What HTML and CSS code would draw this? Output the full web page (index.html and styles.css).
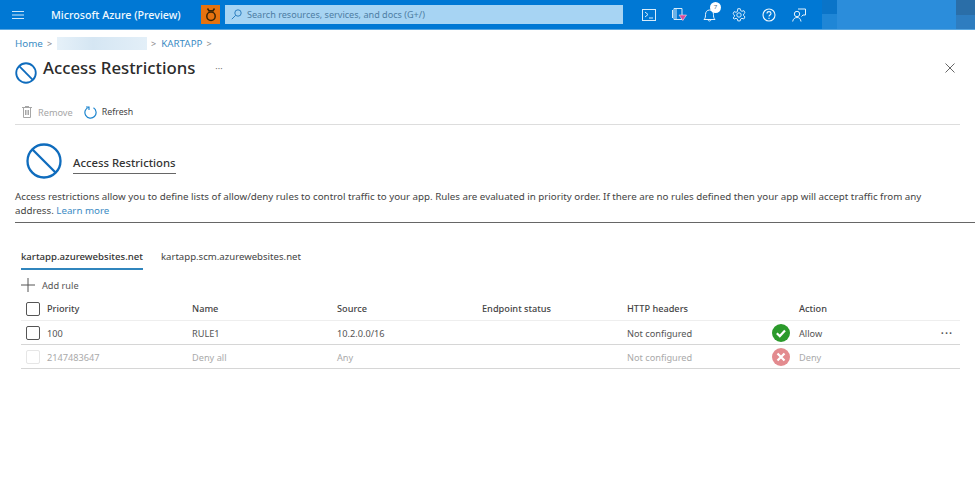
FILE: index.html
```html
<!DOCTYPE html>
<html lang="en">
<head>
    <meta charset="UTF-8">
    <title>Access Restrictions - Microsoft Azure</title>
    <link rel="stylesheet" href="styles.css">
</head>
<body>
    <header class="topbar">
        <svg class="menu-icon" width="12" height="10" viewBox="0 0 12 10"><path d="M0 1.500h12M0 5h12M0 8.500h12" stroke="#cfe6f8" stroke-width="1"/></svg>
        <div class="brand">Microsoft Azure (Preview)</div>
        <div class="bug-btn">
            <svg width="14" height="15" viewBox="0 0 14 15" fill="none" stroke="#3a2506" stroke-width="1.500"><circle cx="7" cy="9.200" r="4.200"/><path d="M3.500 1.500l2 3M10.500 1.500l-2 3M5 3.800h4"/></svg>
        </div>
        <div class="search">
            <svg width="11" height="11" viewBox="0 0 11 11" fill="none" stroke="#2f7fbf" stroke-width="1"><circle cx="7" cy="4" r="3.200"/><path d="M4.700 6.300L.8 10.200"/></svg>
            <span>Search resources, services, and docs (G+/)</span>
        </div>
        <nav class="top-icons">
            <svg width="14" height="12" viewBox="0 0 14 12" fill="none" stroke="#d8ecfa"><rect x=".5" y=".5" width="13" height="11"/><path d="M3 3l3 2.500L3 8M7 9h4"/></svg>
            <svg width="15" height="15" viewBox="0 0 15 15" fill="none" stroke="#d8ecfa"><path d="M2 1.500h8v11H2zM.5 3v8M4 1.500v11"/><path d="M7 8h7.500l-3.700 5.500z" fill="#d84a9c" stroke="#f4d6e8" stroke-width=".6"/></svg>
            <div class="bell">
                <svg width="13" height="15" viewBox="0 0 13 15" fill="none" stroke="#e6f3fc"><path d="M1 12.500c1.500-1.500 1.500-3 1.500-5C2.500 5 4 3 6.500 3s4 2 4 4.500c0 2 0 3.500 1.500 5zM5 12.500c0 2 3 2 3 0"/></svg>
                <span class="badge">7</span>
            </div>
            <svg width="14" height="14" viewBox="0 0 14 14" fill="none" stroke="#d8ecfa"><circle cx="7" cy="7" r="2.200"/><path d="M5.800.7h2.400l.4 1.900 1.400.7 1.800-.7 1.200 2.100-1.400 1.300v1.600l1.400 1.300-1.200 2.100-1.800-.7-1.400.7-.4 1.900H5.800l-.4-1.900-1.400-.7-1.800.7L1 9.900l1.400-1.300V7L1 5.700l1.200-2.100 1.800.7 1.400-.7z"/></svg>
            <svg width="14" height="14" viewBox="0 0 14 14" fill="none" stroke="#eef7fd" stroke-width="1.100"><circle cx="7" cy="7" r="6"/><path d="M5 5.500C5 4.200 6 3.600 7 3.600s2 .7 2 1.800c0 1.600-2 1.500-2 3.200"/><path d="M7 9.700v1.200"/></svg>
            <svg width="14" height="14" viewBox="0 0 14 14" fill="none" stroke="#e6f3fc"><circle cx="5" cy="6" r="2.700"/><path d="M.7 13.500c.3-2.500 2-4 4.300-4s3.500 1.200 4 4M6 1h7.500v6H11l-1.500 1.500"/></svg>
        </nav>
        <div class="banner">
            <i class="b1"></i><i class="b2"></i><i class="b3"></i>
        </div>
    </header>

    <main class="blade">
        <div class="breadcrumb">
            <a href="#">Home</a><span class="sep">&gt;</span>
            <span class="blurred"></span><span class="sep">&gt;</span>
            <a href="#">KARTAPP</a><span class="sep">&gt;</span>
        </div>

        <div class="title-row">
            <svg class="no-icon" width="22" height="22" viewBox="0 0 36 36" fill="none" stroke="#0f6cbd" stroke-width="3"><circle cx="18" cy="18" r="16"/><path d="M6.500 6.500l23 23"/></svg>
            <h1>Access Restrictions</h1>
            <span class="title-more">···</span>
            <svg class="close" width="10" height="10" viewBox="0 0 10 10" stroke="#666" fill="none"><path d="M.5.500l9 9M9.500.500l-9 9"/></svg>
        </div>

        <div class="toolbar">
            <span class="tool disabled">
                <svg width="10" height="12" viewBox="0 0 10 12" fill="none" stroke="#a6a6a6"><path d="M1.500 2v9.500h7V2M0 1.500h10M3 .5h4M3.500 4v5M5 4v5M6.500 4v5"/></svg>
                Remove
            </span>
            <span class="tool refresh">
                <svg width="13" height="13" viewBox="0 0 13 13" fill="none" stroke="#1f86cf" stroke-width="1.200"><path d="M4.800 1.200A5.600 5.600 0 1 0 9.500 1.800"/><path d="M5 4V1H2"/></svg>
                Refresh
            </span>
        </div>

        <div class="section-head">
            <svg width="36" height="36" viewBox="0 0 36 36" fill="none" stroke="#0f6cbd" stroke-width="2.300"><circle cx="18" cy="18" r="16.500"/><path d="M6.500 6.500l23 23"/></svg>
            <h2>Access Restrictions</h2>
        </div>

        <p class="desc">Access restrictions allow you to define lists of allow/deny rules to control traffic to your app. Rules are evaluated in priority order. If there are no rules defined then your app will accept traffic from any address. <a href="#">Learn more</a></p>

        <div class="tabs">
            <span class="tab active">kartapp.azurewebsites.net</span>
            <span class="tab">kartapp.scm.azurewebsites.net</span>
        </div>

        <div class="add-rule">
            <svg width="14" height="14" viewBox="0 0 14 14" stroke="#555" fill="none"><path d="M7 0v14M0 7h14"/></svg>
            Add rule
        </div>

        <div class="rules">
            <div class="row head">
                <span class="check"></span>
                <span>Priority</span><span>Name</span><span>Source</span><span>Endpoint status</span><span>HTTP headers</span><span></span><span>Action</span><span></span>
            </div>
            <div class="row">
                <span class="check"></span>
                <span>100</span><span>RULE1</span><span>10.2.0.0/16</span><span></span><span>Not configured</span>
                <svg width="18" height="18" viewBox="0 0 18 18"><circle cx="9" cy="9" r="9" fill="#2b9a2b"/><path d="M4.800 9.300l3 2.800 5.200-5.500" fill="none" stroke="#fff" stroke-width="2.200"/></svg>
                <span>Allow</span>
                <span class="more">•••</span>
            </div>
            <div class="row muted">
                <span class="check"></span>
                <span>2147483647</span><span>Deny all</span><span>Any</span><span></span><span>Not configured</span>
                <svg width="18" height="18" viewBox="0 0 18 18"><circle cx="9" cy="9" r="9" fill="#e38b8f"/><path d="M5.500 5.500l7 7M12.500 5.500l-7 7" fill="none" stroke="#fff" stroke-width="2.200"/></svg>
                <span>Deny</span>
                <span></span>
            </div>
        </div>
    </main>
</body>
</html>
```

FILE: styles.css
```css
body {
    margin: 0;
    background-color: #fff;
    font-family: "Noto Sans", "Open Sans", Arial, sans-serif;
    font-size: 9.200px;
    color: #444;
    overflow: hidden;
}
a {
    color: #3b8cc4;
    text-decoration: none;
}
h1, h2, p {
    margin: 0;
    font-weight: normal;
}

/* top bar */
.topbar {
    display: flex;
    align-items: center;
    height: 29px;
    background-color: #0078d4;
    border-bottom: 1px solid #5aa7e0;
}
.menu-icon {
    margin-left: 12px;
}
.brand {
    width: 150px;
    margin-left: 27px;
    color: #f0f8fe;
    font-size: 10.700px;
    font-weight: 500;
}
.bug-btn {
    display: flex;
    align-items: center;
    justify-content: center;
    width: 19px;
    height: 19px;
    background-color: #e6720f;
}
.search {
    display: flex;
    align-items: center;
    gap: 5px;
    width: 392px;
    height: 19px;
    margin-left: 5px;
    padding-left: 6px;
    background-color: #a7d4f3;
    color: #4d7da3;
    font-size: 9.100px;
}
.top-icons {
    display: flex;
    align-items: center;
    gap: 16px;
    margin-left: 19px;
}
.bell {
    position: relative;
    display: flex;
}
.badge {
    position: absolute;
    top: -5px;
    right: -5px;
    width: 11px;
    height: 11px;
    border-radius: 50%;
    background-color: #fff;
    color: #4a6a85;
    font-size: 6px;
    line-height: 11px;
    text-align: center;
}
.banner {
    position: relative;
    flex: 1;
    align-self: stretch;
    margin-left: 16px;
    background-color: #2e7dc0;
}
.banner i {
    position: absolute;
    display: block;
}
.b1 {
    left: 0;
    top: 0;
    width: 15px;
    height: 29px;
    background: linear-gradient(#0a74c8 50%, #1f86d6 50%);
}
.b2 {
    right: 0;
    top: 0;
    width: 19px;
    height: 15px;
    background-color: #2a6ea8;
}
.b3 {
    left: 15px;
    top: 0;
    width: 119px;
    height: 29px;
    background-color: #2b8ddb;
}

/* blade header */
.blade {
    padding: 0 15px;
}
.breadcrumb {
    display: flex;
    align-items: center;
    height: 14px;
    margin-top: 6px;
    font-size: 9.800px;
}
.sep {
    margin: 0 5px 0 4px;
    color: #888;
    font-size: 9px;
}
.blurred {
    width: 90px;
    height: 13px;
    background: linear-gradient(90deg, #e6f1f9, #d5e6f3 40%, #e3eff8 100%);
}
.title-row {
    display: flex;
    align-items: center;
    height: 26px;
    margin-top: 5px;
}
.no-icon {
    margin-top: 9px;
}
.title-row h1 {
    margin-left: 6px;
    margin-top: -2px;
    color: #2b2b2b;
    font-size: 16.800px;
    font-weight: 500;
}
.title-more {
    margin-left: 20px;
    color: #777;
    font-size: 9px;
}
.close {
    margin-left: auto;
    margin-right: 5px;
}
.toolbar {
    display: flex;
    align-items: center;
    gap: 11px;
    height: 24px;
    margin-top: 17px;
    padding-top: 2px;
    padding-left: 7px;
    border-bottom: 1px solid #ddd;
}
.tool {
    display: flex;
    align-items: center;
    gap: 6px;
    color: #444;
}
.tool.refresh {
    gap: 5px;
    font-size: 8.800px;
}
.tool.disabled {
    color: #a6a6a6;
}
.section-head {
    display: flex;
    align-items: center;
    gap: 11px;
    margin-top: 18px;
    padding-left: 11px;
}
.section-head h2 {
    margin-top: 7px;
    padding-bottom: 3px;
    border-bottom: 1px solid #666;
    color: #333;
    font-size: 11.300px;
    font-weight: 500;
}
.desc {
    margin: 11px -15px 0 0;
    padding-right: 30px;
    padding-bottom: 4px;
    border-bottom: 1px solid #666;
    line-height: 14px;
    font-size: 9.750px;
    color: #444;
}

/* tabs */
.tabs {
    display: flex;
    gap: 18px;
    margin-top: 26px;
    padding-left: 6px;
    font-size: 9.600px;
}
.tab {
    height: 19px;
    line-height: 15px;
    color: #444;
}
.tab.active {
    border-bottom: 2px solid #3085bd;
    color: #333;
    font-weight: 500;
}

/* rule list */
.add-rule {
    display: flex;
    align-items: center;
    gap: 7px;
    height: 16px;
    margin-top: 7px;
    padding-left: 6px;
    color: #555;
}
.rules {
    margin: 4px 0 0 6px;
    width: 939px;
}
.row {
    display: grid;
    grid-template-columns: 26px 145px 145px 145px 145px 145px 27px 142px 19px;
    align-items: center;
    height: 22px;
    padding-top: 1px;
    border-bottom: 1px solid #d6d6d6;
    color: #555;
}
.row.head {
    height: 23px;
    padding-top: 0;
    border-bottom-color: #eee;
    color: #444;
    font-weight: 500;
}
.row.muted {
    color: #aaa;
}
.check {
    width: 12px;
    height: 12px;
    margin-left: 5px;
    border: 1px solid #555;
    border-radius: 2px;
}
.row.muted .check {
    border-color: #e6e6e6;
}
.more {
    color: #555;
    font-size: 7px;
    letter-spacing: 1.500px;
}
```
